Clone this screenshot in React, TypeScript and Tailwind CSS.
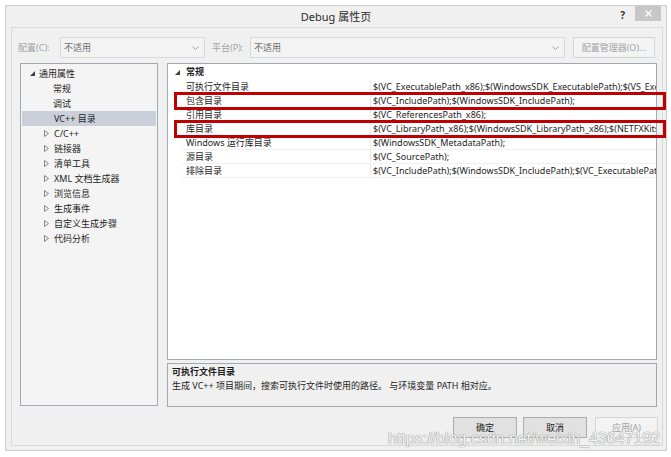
import React from "react";

const F = "font-['Noto_Sans','Noto_Sans_CJK_SC',sans-serif]";

function Chevron() {
  return (
    <svg width="7" height="4" viewBox="0 0 7 4" className="shrink-0">
      <polyline points="0.5,0.5 3.5,3.5 6.5,0.5" fill="none" stroke="#9a9a9a" strokeWidth="0.9" />
    </svg>
  );
}

function Expanded() {
  return (
    <svg width="5" height="5" viewBox="0 0 5 5" className="shrink-0">
      <polygon points="5,0 5,5 0,5" fill="#404040" />
    </svg>
  );
}

function Collapsed() {
  return (
    <svg width="5" height="7" viewBox="0 0 5 7" className="shrink-0">
      <polygon points="0.5,0.5 4.5,3.5 0.5,6.5" fill="none" stroke="#7a7a7a" strokeWidth="0.9" />
    </svg>
  );
}

const treeChildren = ["常规", "调试", "VC++ 目录"];
const treeCollapsed = ["C/C++", "链接器", "清单工具", "XML 文档生成器", "浏览信息", "生成事件", "自定义生成步骤", "代码分析"];

const rows: [string, string][] = [
  ["可执行文件目录", "$(VC_ExecutablePath_x86);$(WindowsSDK_ExecutablePath);$(VS_ExecutablePath);$(MSBuild_ExecutablePath)"],
  ["包含目录", "$(VC_IncludePath);$(WindowsSDK_IncludePath);"],
  ["引用目录", "$(VC_ReferencesPath_x86);"],
  ["库目录", "$(VC_LibraryPath_x86);$(WindowsSDK_LibraryPath_x86);$(NETFXKitsDir)Lib\\um\\x86"],
  ["Windows 运行库目录", "$(WindowsSDK_MetadataPath);"],
  ["源目录", "$(VC_SourcePath);"],
  ["排除目录", "$(VC_IncludePath);$(WindowsSDK_IncludePath);$(VC_ExecutablePath_x86);"],
];

export default function App() {
  return (
    <div className={`relative w-[671px] h-[457px] bg-white overflow-hidden pt-[5px] pl-[5px] text-[9px] leading-[14px] text-[#1e1e1e] ${F}`}>
      {/* window */}
      <div className="w-[662px] h-[446px] border border-[#cdcdcd] bg-[#f0f0f0] flex flex-col">
        {/* title bar */}
        <div className="h-[21px] grid grid-cols-[1fr_auto_1fr] items-start">
          <div />
          <div className="pt-[3px] text-[11px] leading-[15px] text-[#2b2b2b]">Debug 属性页</div>
          <div className="flex justify-end items-start pr-[5px]">
            <div className="mt-[3px] mr-[10px] text-[10px] leading-[12px] font-bold text-[#333]">?</div>
            <div className="w-[26px] h-[15px] bg-[#c7c7c7] flex items-center justify-center">
              <svg width="7" height="7" viewBox="0 0 7 7">
                <path d="M0.5 0.5 L6.5 6.5 M6.5 0.5 L0.5 6.5" stroke="#ffffff" strokeWidth="1.2" />
              </svg>
            </div>
          </div>
        </div>

        {/* inner frame */}
        <div className="ml-[5px] mr-[3px] h-[419px] border border-[#dadada] flex flex-col">
          {/* config row */}
          <div className="mt-[9px] h-[21px] flex items-center pl-[6px]">
            <div className="w-[42px] text-[#a3a3a3]">配置(C):</div>
            <div className="w-[145px] h-[21px] border border-[#dadada] bg-[#f3f3f3] flex items-center justify-between pl-[3px] pr-[5px] text-[#6d6d6d]">
              <span>不适用</span>
              <Chevron />
            </div>
            <div className="ml-[7px] w-[38px] text-[#a3a3a3]">平台(P):</div>
            <div className="w-[315px] h-[21px] border border-[#dadada] bg-[#f3f3f3] flex items-center justify-between pl-[3px] pr-[5px] text-[#6d6d6d]">
              <span>不适用</span>
              <Chevron />
            </div>
            <div className="ml-[8px] w-[82px] h-[21px] border border-[#d6d6d6] bg-[#f3f3f3] flex items-center justify-center text-[#a3a3a3]">
              配置管理器(O)...
            </div>
          </div>

          {/* main area */}
          <div className="mt-[5px] h-[344px] flex pl-[8px]">
            {/* tree */}
            <div className="w-[138px] h-[343px] border border-[#a3a9b1] bg-[#f4f4f4] pt-[2px]">
              <div className="h-[15px] flex items-center pl-[9px] gap-[4px]">
                <Expanded />
                <span>通用属性</span>
              </div>
              {treeChildren.map((t, i) => (
                <div
                  key={t}
                  className={`h-[15px] flex items-center pl-[32px] ${i === 2 ? "bg-[#cacfd9] mx-[1px] pl-[31px]" : ""}`}
                >
                  {t}
                </div>
              ))}
              {treeCollapsed.map((t) => (
                <div key={t} className="h-[15px] flex items-center pl-[23px] gap-[5px]">
                  <Collapsed />
                  <span>{t}</span>
                </div>
              ))}
            </div>

            {/* right column */}
            <div className="ml-[9px] w-[490px] flex flex-col">
              <div className="h-[297px] border border-[#a3a9b1] bg-white overflow-hidden">
                <div className="h-[16px] flex items-center pl-[7px] gap-[6px] font-bold">
                  <Expanded />
                  <span>常规</span>
                </div>
                {rows.map(([n, v]) => (
                  <div key={n} className="h-[14px] ml-[14px] flex border-b border-[#f0f0f0] whitespace-nowrap">
                    <div className="w-[189px] shrink-0 pl-[4px] leading-[13px] border-r border-[#ececec]">{n}</div>
                    <div className="pl-[2px] leading-[13px] overflow-hidden">{v}</div>
                  </div>
                ))}
              </div>
              <div className="mt-[3px] h-[44px] border border-[#a6a6a6] bg-[#f0f0f0] px-[4px] pt-[1px]">
                <div className="font-bold">可执行文件目录</div>
                <div>生成 VC++ 项目期间，搜索可执行文件时使用的路径。 与环境变量 PATH 相对应。</div>
              </div>
            </div>
          </div>

          {/* buttons */}
          <div className="mt-[10px] flex justify-end pr-[4px]">
            <div className="w-[64px] h-[21px] border border-[#adadad] bg-[#e1e1e1] flex items-center justify-center">确定</div>
            <div className="ml-[6px] w-[64px] h-[21px] border border-[#adadad] bg-[#e1e1e1] flex items-center justify-center">取消</div>
            <div className="ml-[8px] w-[63px] h-[21px] border border-[#d6d6d6] bg-[#f3f3f3] flex items-center justify-center text-[#a3a3a3]">应用(A)</div>
          </div>
        </div>
      </div>

      {/* red highlight boxes (annotations) */}
      <div className="absolute left-[174px] top-[92px] w-[492px] h-[18px] border-[3px] border-[#c00000]" />
      <div className="absolute left-[174px] top-[120px] w-[492px] h-[18px] border-[3px] border-[#c00000]" />

      {/* watermark */}
      <div className="absolute left-[388px] top-[429px] text-[16px] leading-[20px] font-['Liberation_Sans',sans-serif] text-[#f4f4f4] [text-shadow:0_0_1px_#8a8a8a,0_0_1px_#8a8a8a]">
        https://blog.csdn.net/weixin_43647192
      </div>
    </div>
  );
}
